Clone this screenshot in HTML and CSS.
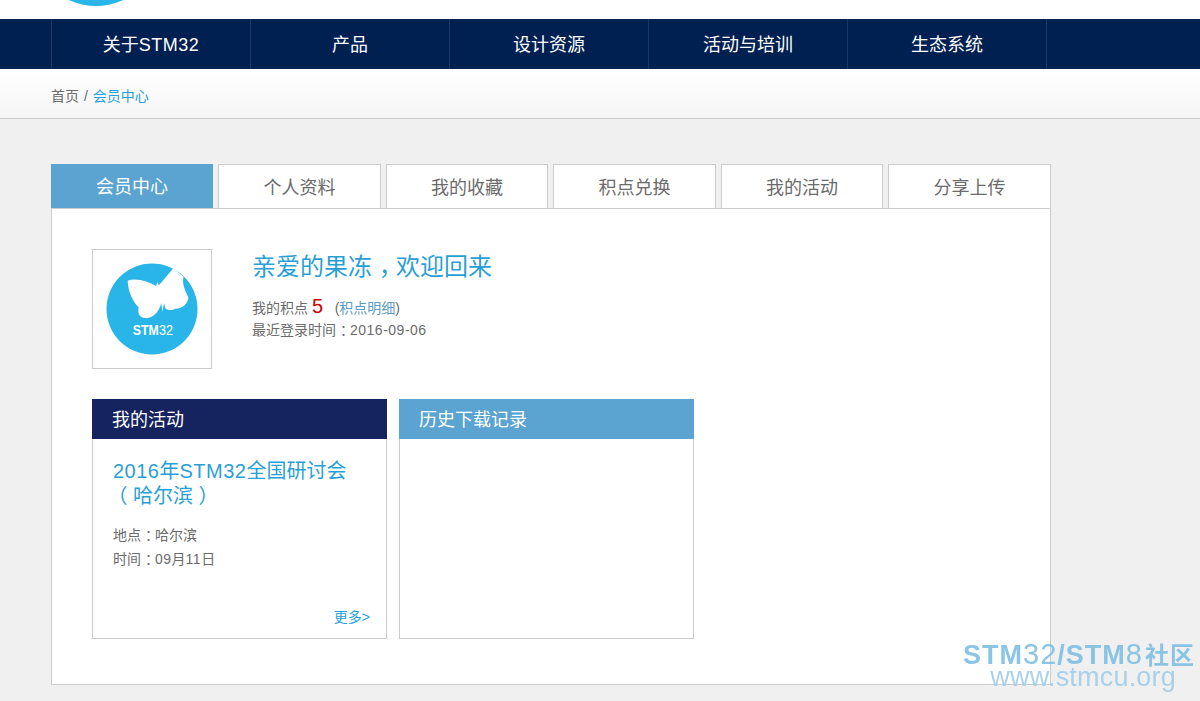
FILE: index.html
```html
<!DOCTYPE html>
<html lang="zh-CN">
<head>
    <meta charset="UTF-8">
    <title>会员中心</title>
    <link rel="stylesheet" href="styles.css">
</head>
<body>
<div class="top">
    <svg class="top-logo" width="120" height="19" viewBox="0 0 120 19"><circle cx="46" cy="-59" r="65" fill="#29b5e8"/></svg>
</div>

<div class="nav">
    <a class="nav-item">关于<span class="latin">STM32</span></a>
    <a class="nav-item">产品</a>
    <a class="nav-item">设计资源</a>
    <a class="nav-item">活动与培训</a>
    <a class="nav-item">生态系统</a>
</div>

<div class="crumb">
    <span>首页</span> <span class="crumb-sep">/</span> <a class="link">会员中心</a>
</div>

<div class="main">
    <div class="tabs">
        <a class="tab active">会员中心</a>
        <a class="tab">个人资料</a>
        <a class="tab">我的收藏</a>
        <a class="tab">积点兑换</a>
        <a class="tab">我的活动</a>
        <a class="tab">分享上传</a>
    </div>

    <div class="panel">
        <div class="profile">
            <div class="avatar">
                <svg width="118" height="118" viewBox="1 1 118 118">
                    <circle cx="60" cy="60" r="45.5" fill="#29b5e8"/>
                    <path fill="#fff" transform="translate(-12 -9) scale(.3333)" d="M143 122C170 112 205 125 228 138L232 127L237 136L280 85L311 110C305 130 315 150 325 172C325 195 300 208 285 206C275 212 262 212 256 205L252 190L247 215L244 190C238 210 225 232 200 235C180 235 172 222 176 202C160 185 145 160 143 122Z"/>
                    <text class="logo-text logo-bold" x="40.7" y="86" textLength="26" lengthAdjust="spacingAndGlyphs">STM</text>
                    <text class="logo-text" x="67" y="86" textLength="14" lengthAdjust="spacingAndGlyphs">32</text>
                </svg>
            </div>
            <div class="info">
                <h2 class="welcome">亲爱的果冻<span class="p-mid">，</span>欢迎回来</h2>
                <p class="points">我的积点 <span class="num">5</span> &nbsp; (<a class="link-soft">积点明细</a>)</p>
                <p class="last-login">最近登录时间<span class="p-mid">：</span><span class="latin">2016-09-06</span></p>
            </div>
        </div>

        <div class="cards">
            <div class="card">
                <div class="card-head dark">我的活动</div>
                <div class="card-body">
                    <a class="event-title"><span class="latin">2016</span>年<span class="latin">STM32</span>全国研讨会<span class="p-open">（</span>哈尔滨<span class="p-mid">）</span></a>
                    <p class="event-line">地点<span class="p-mid">：</span>哈尔滨</p>
                    <p class="event-line">时间<span class="p-mid">：</span><span class="latin">09</span>月<span class="latin">11</span>日</p>
                    <a class="more">更多&gt;</a>
                </div>
            </div>
            <div class="card">
                <div class="card-head blue">历史下载记录</div>
                <div class="card-body"></div>
            </div>
        </div>
    </div>
</div>

<div class="watermark">
    <div class="wm-top"><b>STM</b><span class="wm-thin">32</span><b>/STM</b><span class="wm-thin">8</span><b class="wm-cn">社区</b></div>
    <div class="wm-url">www.stmcu.org</div>
</div>
</body>
</html>
```

FILE: styles.css
```css
* {
    box-sizing: border-box;
}
body {
    margin: 0;
    background-color: #f0f0f0;
    font-family: "Liberation Sans", "Noto Sans CJK SC", sans-serif;
    color: #6b6b6b;
    overflow: hidden;
}
p, h2 {
    margin: 0;
    font-weight: normal;
}
.latin {
    letter-spacing: 0.5px;
}
/* full-width punctuation sits centred in its cell on the original */
.p-mid {
    display: inline-block;
    padding-left: 0.28em;
    letter-spacing: -0.28em;
}
.p-open {
    display: inline-block;
    margin-left: -0.28em;
    padding-right: 0.28em;
}
.top {
    height: 19px;
    background-color: #fff;
    overflow: hidden;
}
.top-logo {
    display: block;
    margin-left: 50px;
}
.nav {
    display: flex;
    height: 50px;
    padding-left: 51px;
    background-color: #002052;
}
.nav-item {
    width: 199px;
    border-left: 1px solid #153a66;
    color: #fff;
    font-size: 18px;
    line-height: 52px;
    text-align: center;
}
.nav-item:last-child {
    border-right: 1px solid #153a66;
    width: 200px;
}
.crumb {
    height: 50px;
    padding-left: 51px;
    border-bottom: 1px solid #ccc;
    background: linear-gradient(#fff, #f5f5f5);
    font-size: 14px;
    line-height: 55px;
}
.crumb-sep {
    margin: 0 1px;
}
.link {
    color: #2a9fd6;
}
.main {
    width: 1000px;
    margin: 45px 0 0 51px;
}
.tabs {
    display: flex;
    gap: 5px;
    height: 44px;
}
.tab {
    width: 163px;
    height: 44px;
    border: 1px solid #ccc;
    border-bottom: none;
    background-color: #fff;
    font-size: 18px;
    line-height: 46px;
    text-align: center;
}
.tab:nth-child(odd) {
    width: 162px;
}
.tab.active {
    border: none;
    background-color: #5ba3d0;
    color: #fff;
    line-height: 47px;
}
.panel {
    height: 477px;
    padding: 40px;
    border: 1px solid #ccc;
    background-color: #fff;
}
.profile {
    display: flex;
    gap: 40px;
}
.avatar {
    width: 120px;
    height: 120px;
    border: 1px solid #ccc;
}
.avatar svg {
    display: block;
}
.logo-text {
    font-family: "Liberation Sans", sans-serif;
    font-size: 15px;
    fill: #fff;
}
.logo-bold {
    font-weight: 700;
}
.welcome {
    margin-top: 1px;
    color: #2a9fd6;
    font-size: 24px;
    line-height: 34px;
}
.points {
    margin-top: 10px;
    font-size: 14px;
    line-height: 24px;
}
.num {
    color: #c00;
    font-size: 20px;
}
.link-soft {
    color: #5b9bc8;
}
.last-login {
    font-size: 14px;
    line-height: 20px;
}
.cards {
    display: flex;
    gap: 12px;
    margin-top: 30px;
}
.card {
    width: 295px;
    height: 240px;
    display: flex;
    flex-direction: column;
}
.card-head {
    height: 40px;
    padding-left: 20px;
    color: #fff;
    font-size: 18px;
    line-height: 42px;
}
.card-head.dark {
    background-color: #15235e;
}
.card-head.blue {
    background-color: #5ba3d0;
}
.card-body {
    flex: 1;
    position: relative;
    padding: 20px 20px 0;
    border: 1px solid #ccc;
    border-top: none;
}
.event-title {
    display: block;
    margin-bottom: 14px;
    color: #2a9fd6;
    font-size: 20px;
    line-height: 25px;
}
.event-line {
    font-size: 14px;
    line-height: 24px;
}
.more {
    position: absolute;
    right: 16px;
    bottom: 12px;
    color: #2a9fd6;
    font-size: 14px;
    line-height: 18px;
}
.watermark {
    position: fixed;
    right: 0;
    bottom: 15px;
    width: 237px;
    font-family: "Liberation Sans", sans-serif;
    color: #7fbfe4;
    opacity: 0.9;
}
.wm-top {
    font-size: 27px;
    line-height: 26px;
    letter-spacing: 1px;
    white-space: nowrap;
}
.wm-thin {
    font-size: 29px;
    letter-spacing: 1px;
}
.wm-cn {
    font-family: "Noto Sans CJK SC", sans-serif;
    font-size: 24px;
    letter-spacing: 1px;
    margin-left: 2px;
}
.wm-url {
    color: #a3cde8;
    font-size: 27px;
    line-height: 18px;
    letter-spacing: 0.2px;
    text-align: right;
    padding-right: 24px;
    white-space: nowrap;
}
```
